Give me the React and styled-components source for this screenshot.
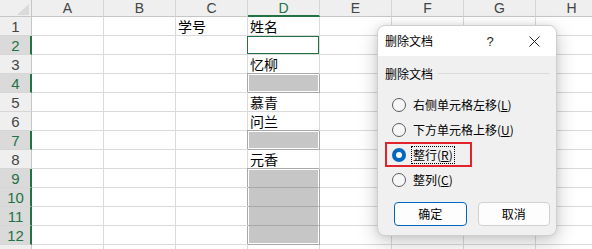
import React from "react";
import styled, { createGlobalStyle, css } from "styled-components";

const GREEN = "#217346";
const COLS = ["A", "B", "C", "D", "E", "F", "G", "H"];
const ROW_COUNT = 12;
const values = {
  C1: "学号",
  D1: "姓名",
  D3: "忆柳",
  D5: "慕青",
  D6: "问兰",
  D8: "元香",
};
// [first, last] of each grey run in column D
const shaded = {
  D4: [true, true],
  D7: [true, true],
  D9: [true, false],
  D10: [false, false],
  D11: [false, false],
  D12: [false, true],
};
const pickedRows = [2, 4, 7, 9, 10, 11, 12];

const options = [
  { text: "右侧单元格左移", key: "L" },
  { text: "下方单元格上移", key: "U" },
  { text: "整行", key: "R", checked: true },
  { text: "整列", key: "C" },
];

const GlobalStyle = createGlobalStyle`
  html, body {
    margin: 0;
    padding: 0;
    background: #fff;
    overflow: hidden;
  }
`;

const Screen = styled.div`
  position: relative;
  width: 592px;
  height: 249px;
  overflow: hidden;
  background: #fff;
`;

const Sheet = styled.div`
  display: grid;
  grid-template-columns: 32px repeat(8, 72px);
  grid-template-rows: 17px repeat(${ROW_COUNT + 1}, 19px);
`;

const Corner = styled.div`
  position: relative;
  background: #efefef;
  border-right: 1px solid #c6c6c6;
  border-bottom: 1px solid #c6c6c6;
  box-sizing: border-box;
  &::after {
    content: "";
    position: absolute;
    right: 2px;
    bottom: 1px;
    width: 0;
    height: 0;
    border-left: 12px solid transparent;
    border-bottom: 11px solid #dadada;
  }
`;

const ColHeader = styled.div`
  display: flex;
  justify-content: center;
  align-items: flex-end;
  box-sizing: border-box;
  background: #efefef;
  border-right: 1px solid #d6d6d6;
  border-bottom: 1px solid #c6c6c6;
  font: 14px "Liberation Sans", Arial, sans-serif;
  line-height: 15px;
  color: #444;
  ${({ $picked }) =>
    $picked &&
    css`
      color: ${GREEN};
      border-bottom: 2px solid ${GREEN};
      line-height: 14px;
    `}
`;

const RowHeader = styled.div`
  display: flex;
  justify-content: center;
  align-items: center;
  box-sizing: border-box;
  background: #efefef;
  border-right: 1px solid #c6c6c6;
  border-bottom: 1px solid #d6d6d6;
  font: 15px "Liberation Sans", Arial, sans-serif;
  color: #444;
  padding-top: 1px;
  ${({ $picked }) =>
    $picked &&
    css`
      background: #dadada;
      color: ${GREEN};
      border-right: 2px solid ${GREEN};
      padding-left: 1px;
    `}
`;

const Cell = styled.div`
  display: flex;
  align-items: flex-end;
  box-sizing: border-box;
  border-right: 1px solid ${({ $shade }) => ($shade ? "#a8a8a8" : "#dadada")};
  border-bottom: 1px solid ${({ $shade }) => ($shade ? "#a8a8a8" : "#dadada")};
  padding-left: 2px;
  font: 14px "Noto Sans CJK SC", sans-serif;
  line-height: 18px;
  color: #000;
  white-space: nowrap;
`;

const ActiveBox = styled.div`
  align-self: stretch;
  flex: 1;
  margin-left: -3px;
  border: 1px solid ${GREEN};
`;

const Fill = styled.div`
  align-self: stretch;
  flex: 1;
  margin-left: -3px;
  background: #c6c6c6;
  border-left: 1px solid #a8a8a8;
  ${({ $first }) =>
    $first &&
    css`
      margin-top: -1px;
      border-top: 1px solid #a8a8a8;
    `}
  box-shadow: inset 1px 0 #fff, inset -1px 0 #fff
    ${({ $first }) => ($first ? ", inset 0 1px #fff" : "")}
    ${({ $last }) => ($last ? ", inset 0 -1px #fff" : "")};
`;

/* dialog */

const Dialog = styled.div`
  position: absolute;
  left: 377px;
  top: 25px;
  width: 180px;
  height: 211px;
  box-sizing: border-box;
  border: 1px solid #cfcfcf;
  border-radius: 8px;
  background: #f0f0f0;
  box-shadow: 0 6px 20px rgba(0, 0, 0, 0.22), 0 0 6px rgba(0, 0, 0, 0.08);
  overflow: hidden;
  font: 12px "Noto Sans CJK SC", sans-serif;
  color: #000;
  display: flex;
  flex-direction: column;
`;

const TitleBar = styled.div`
  display: flex;
  align-items: center;
  height: 30px;
  background: #fff;
  flex-shrink: 0;
`;

const Title = styled.div`
  flex: 1;
  padding-left: 7px;
  line-height: 16px;
`;

const TitleButton = styled.div`
  width: 44px;
  height: 30px;
  display: flex;
  align-items: center;
  justify-content: center;
  font: 13px "Liberation Sans", Arial, sans-serif;
  color: #222;
`;

const Body = styled.div`
  padding: 9px 6px 0 7px;
  display: flex;
  flex-direction: column;
`;

const GroupHeader = styled.div`
  display: flex;
  align-items: center;
  height: 17px;
  margin-bottom: 10px;
  gap: 5px;
  &::after {
    content: "";
    flex: 1;
    height: 1px;
    background: #dcdcdc;
  }
`;

const RadioRow = styled.div`
  display: flex;
  align-items: center;
  height: 25px;
  box-sizing: border-box;
  padding-left: 7px;
  gap: 7px;
  align-self: flex-start;
  ${({ $marked }) =>
    $marked &&
    css`
      width: 87px;
      box-shadow: inset 0 0 0 2px #e3232c;
    `}
`;

const Circle = styled.span`
  width: 14px;
  height: 14px;
  box-sizing: border-box;
  border-radius: 50%;
  flex-shrink: 0;
  ${({ $on }) =>
    $on
      ? css`
          background: #0067c0;
          display: flex;
          align-items: center;
          justify-content: center;
          &::after {
            content: "";
            width: 6px;
            height: 6px;
            border-radius: 50%;
            background: #fff;
          }
        `
      : css`
          border: 1px solid #5c5c5c;
          background: #f7f7f7;
        `}
`;

const Label = styled.span`
  line-height: 14px;
  padding: 1px 1px;
  border: 1px dotted ${({ $focus }) => ($focus ? "#000" : "transparent")};
  margin-left: -2px;
  white-space: nowrap;
`;

const ButtonRow = styled.div`
  display: flex;
  gap: 11px;
  margin: 10px 0 0 9px;
`;

const Button = styled.div`
  width: 73px;
  height: 24px;
  box-sizing: border-box;
  border-radius: 4px;
  background: #fdfdfd;
  border: 1px solid ${({ $primary }) => ($primary ? "#0067c0" : "#d0d0d0")};
  display: flex;
  align-items: center;
  justify-content: center;
  line-height: 14px;
`;

const CloseIcon = () => (
  <svg width="11" height="11" viewBox="0 0 11 11">
    <path d="M0.5 0.5 L10.5 10.5 M10.5 0.5 L0.5 10.5" stroke="#222" strokeWidth="1" fill="none" />
  </svg>
);

const renderCell = (col, row) => {
  const id = `${col}${row}`;
  const shade = shaded[id];
  return (
    <Cell key={id} $shade={!!shade}>
      {id === "D2" && <ActiveBox />}
      {shade && <Fill $first={shade[0]} $last={shade[1]} />}
      {values[id]}
    </Cell>
  );
};

const App = () => {
  const rows = Array.from({ length: ROW_COUNT }, (_, i) => i + 1);
  return (
    <Screen>
      <GlobalStyle />
      <Sheet>
        <Corner />
        {COLS.map((c) => (
          <ColHeader key={c} $picked={c === "D"}>
            {c}
          </ColHeader>
        ))}
        {rows.map((r) => (
          <React.Fragment key={r}>
            <RowHeader $picked={pickedRows.includes(r)}>{r}</RowHeader>
            {COLS.map((c) => renderCell(c, r))}
          </React.Fragment>
        ))}
        {/* next row, only its top edge shows in the window */}
        <RowHeader />
        {COLS.map((c) => (
          <Cell key={`${c}-next`} />
        ))}
      </Sheet>

      <Dialog>
        <TitleBar>
          <Title>删除文档</Title>
          <TitleButton>?</TitleButton>
          <TitleButton>
            <CloseIcon />
          </TitleButton>
        </TitleBar>
        <Body>
          <GroupHeader>删除文档</GroupHeader>
          {options.map((o) => (
            <RadioRow key={o.key} $marked={o.checked}>
              <Circle $on={o.checked} />
              <Label $focus={o.checked}>
                {o.text}(<u>{o.key}</u>)
              </Label>
            </RadioRow>
          ))}
          <ButtonRow>
            <Button $primary>确定</Button>
            <Button>取消</Button>
          </ButtonRow>
        </Body>
      </Dialog>
    </Screen>
  );
};

export default App;
